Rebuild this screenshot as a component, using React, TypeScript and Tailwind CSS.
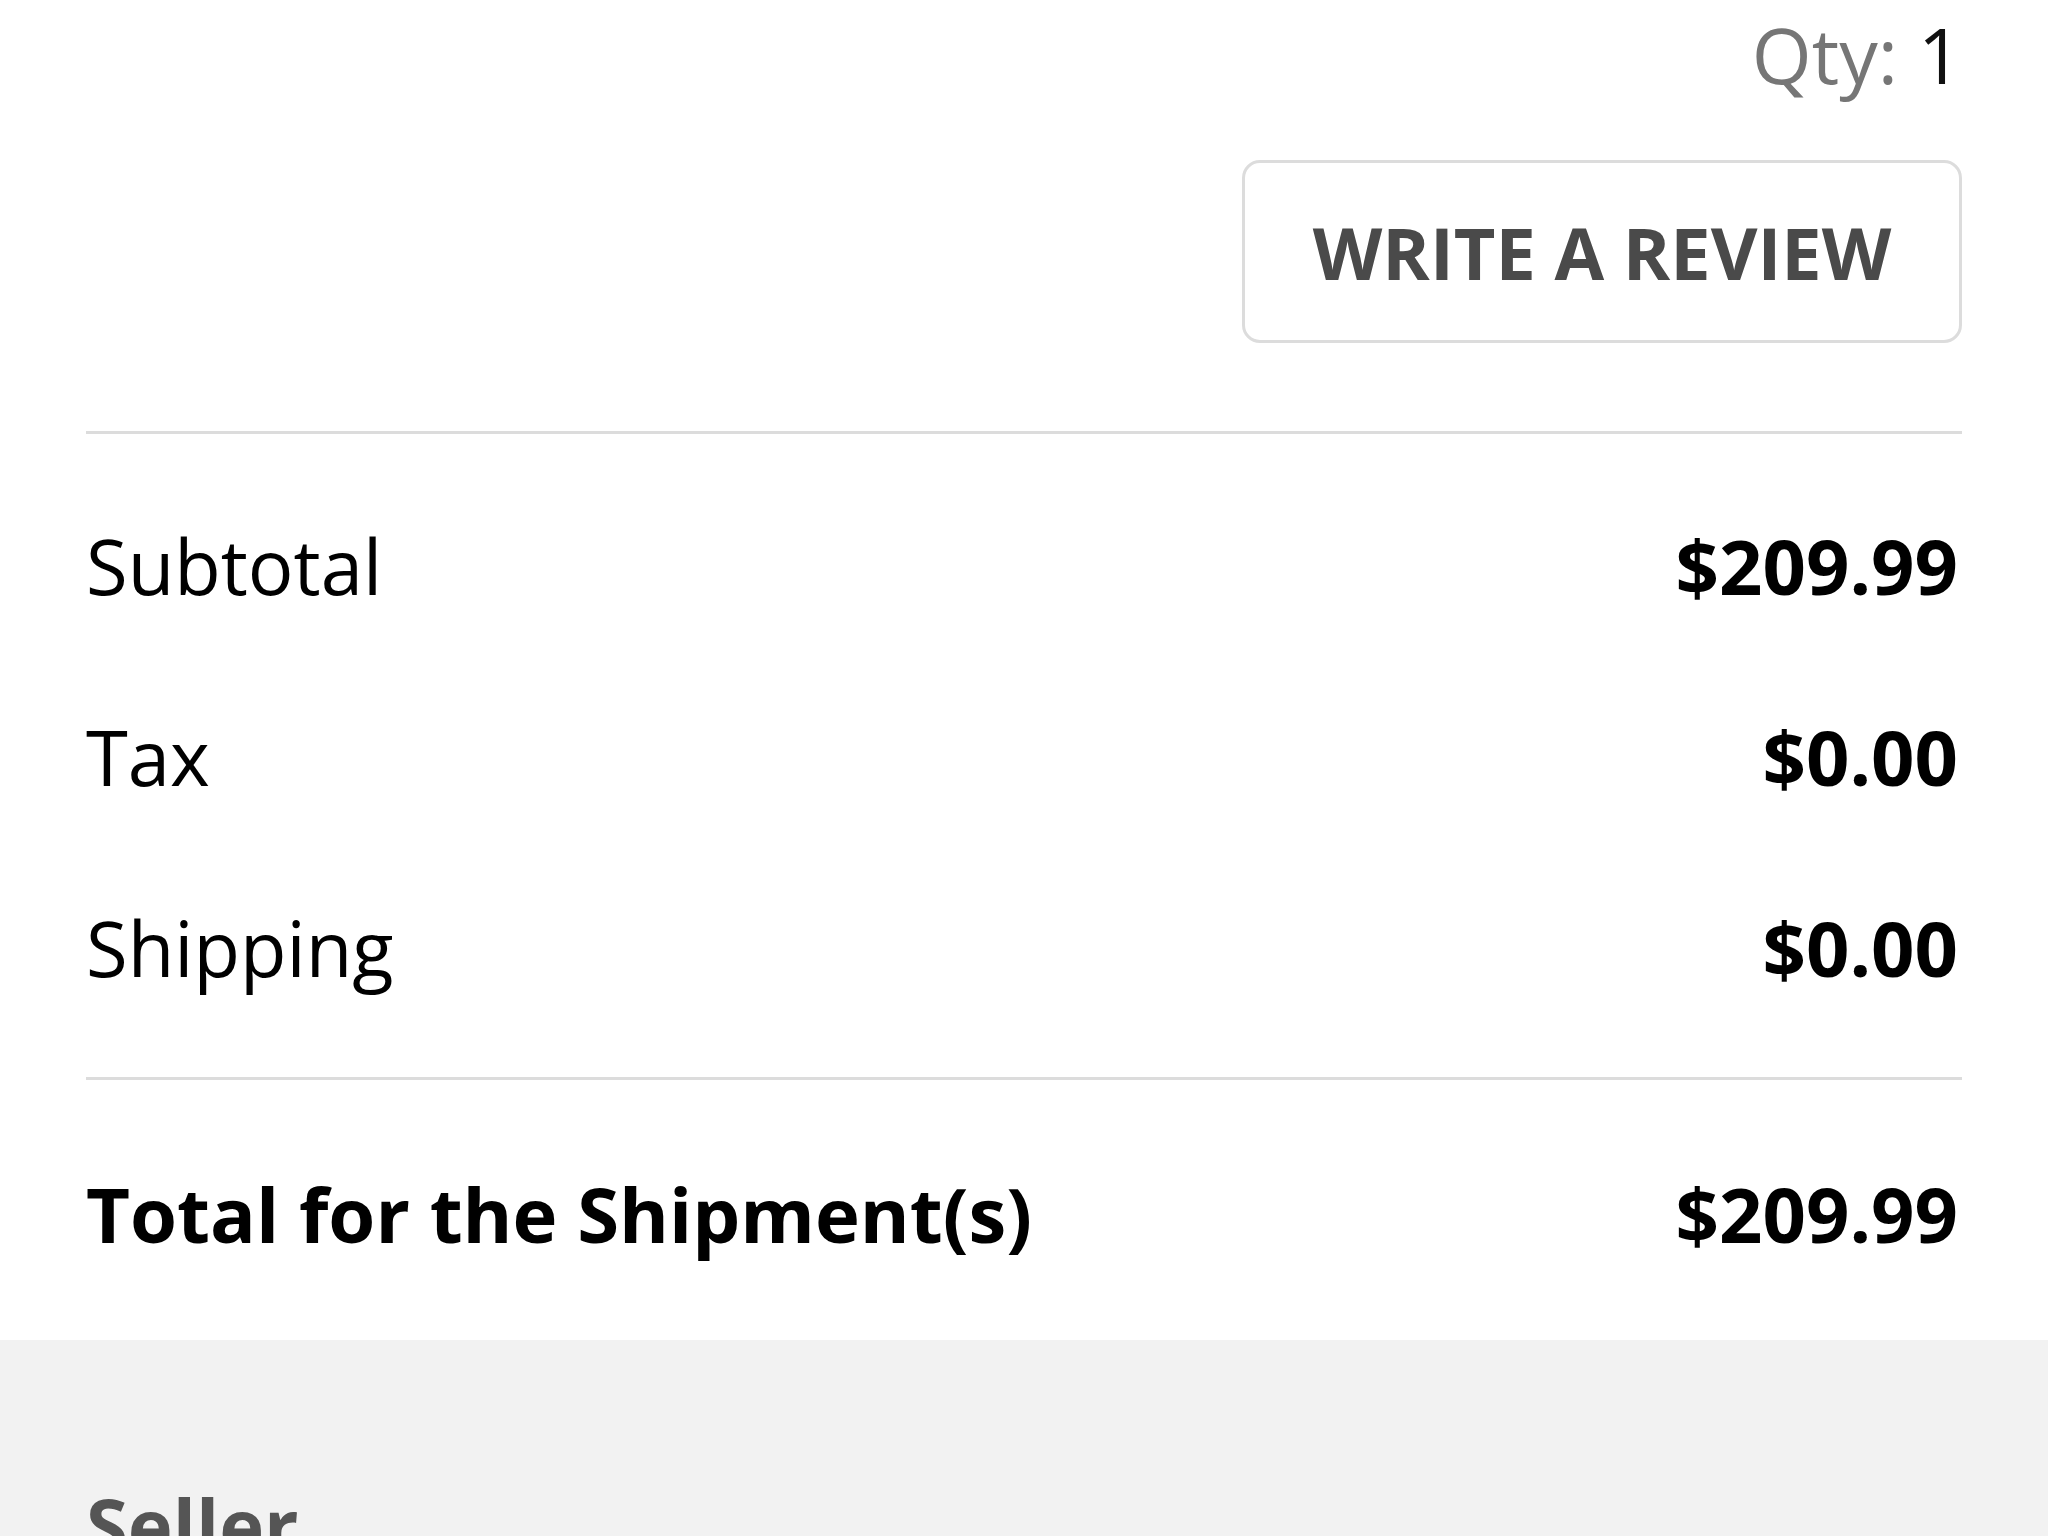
import React from 'react';

const rows = [
  { label: 'Subtotal', value: '$209.99' },
  { label: 'Tax', value: '$0.00' },
  { label: 'Shipping', value: '$0.00' },
];

const App = () => {
  return (
    <div className="min-h-screen bg-white font-['Open_Sans',sans-serif] text-black">
      <section className="px-[86px]">
        <div className="pt-[3px] text-right text-[77px] leading-[104px]">
          <span className="text-[#767676]">Qty:</span> <span className="text-[#111]">1</span>
        </div>

        <div className="mt-[53px] flex justify-end">
          <button className="flex h-[183px] w-[720px] items-center justify-center rounded-[18px] border-[3px] border-[#dcdcdc] bg-white text-[72px] leading-[72px] font-bold text-[#4a4a4a]">
            WRITE A REVIEW
          </button>
        </div>

        <div className="mt-[88px] h-[3px] bg-[#dcdcdc]"></div>

        <div className="pt-[36px] pb-[34px]">
          {rows.map((row) => (
            <div key={row.label} className="flex h-[191px] items-center justify-between">
              <span className="text-[76px] leading-[104px]">{row.label}</span>
              <span className="pr-[4px] text-[76px] leading-[104px] font-bold">{row.value}</span>
            </div>
          ))}
        </div>

        <div className="h-[3px] bg-[#dcdcdc]"></div>

        <div className="flex h-[260px] items-start justify-between pt-[82px]">
          <span className="text-[76px] leading-[104px] font-bold">Total for the Shipment(s)</span>
          <span className="pr-[4px] text-[76px] leading-[104px] font-bold">$209.99</span>
        </div>
      </section>

      <section className="h-[400px] bg-[#f2f2f2] px-[86px] pt-[133px]">
        <h3 className="text-[76px] leading-[104px] font-bold text-[#555]">Seller</h3>
      </section>
    </div>
  );
};

export default App;
